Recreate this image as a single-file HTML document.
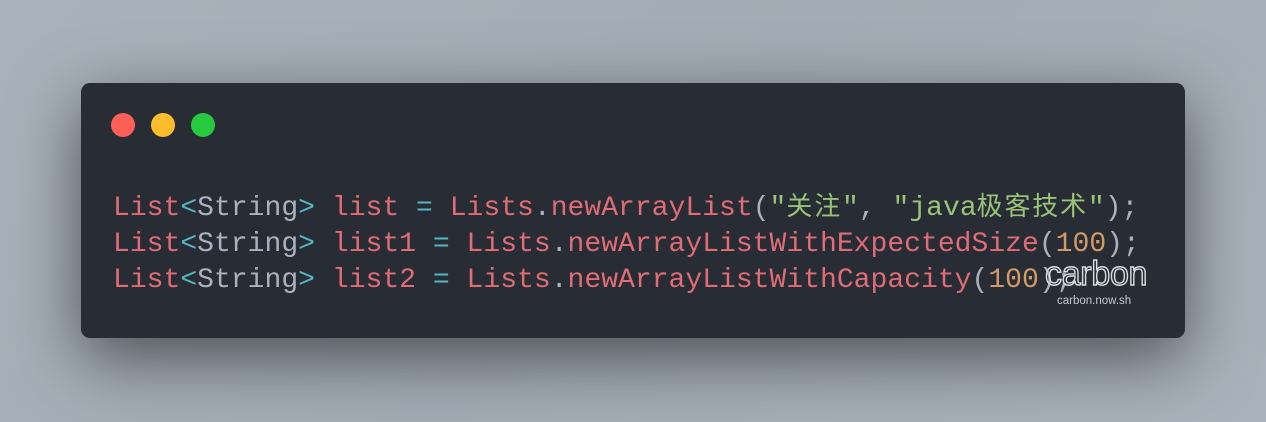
<!DOCTYPE html>
<html><head><meta charset="utf-8"><style>
html,body{margin:0;padding:0;}
body{width:1266px;height:422px;overflow:hidden;background:linear-gradient(135deg,#a9b2bc 0%,#a3acb6 50%,#a9b2bc 100%);position:relative;}
.win{position:absolute;left:81px;top:83px;width:1104px;height:255px;background:#282c34;border-radius:9px;box-shadow:0 20px 68px rgba(0,0,0,0.55);}
.dot{position:absolute;top:30px;width:24px;height:24px;border-radius:50%;}
pre{position:absolute;left:32px;top:104px;margin:0;font-family:"Liberation Mono",monospace;font-size:28.05px;line-height:36px;color:#abb2bf;}
.r{color:#e06c75}.c{color:#56b6c2}.g{color:#98c379}.o{color:#d19a66}
.k{font-family:"Noto Sans CJK SC",sans-serif;letter-spacing:1.8px;font-size:26px}
.wm{position:absolute;left:964px;top:172px;font-family:"Liberation Sans",sans-serif;font-size:34px;color:transparent;-webkit-text-stroke:1.4px #d8dde3;letter-spacing:-0.3px;}
.wm2{position:absolute;left:976px;top:212px;font-family:"Liberation Sans",sans-serif;font-size:11.5px;color:#c4c9cf;}
</style></head><body>
<div class="win">
<div class="dot" style="left:30px;background:#ff5f56"></div>
<div class="dot" style="left:70px;background:#ffbd2e"></div>
<div class="dot" style="left:110px;background:#27c93f"></div>
<pre><span class="r">List</span><span class="c">&lt;</span>String<span class="c">&gt;</span> <span class="r">list</span> <span class="c">=</span> <span class="r">Lists</span>.<span class="r">newArrayList</span>(<span class="g">"<span class="k">关注</span>"</span>, <span class="g">"java<span class="k">极客技术</span>"</span>);
<span class="r">List</span><span class="c">&lt;</span>String<span class="c">&gt;</span> <span class="r">list1</span> <span class="c">=</span> <span class="r">Lists</span>.<span class="r">newArrayListWithExpectedSize</span>(<span class="o">100</span>);
<span class="r">List</span><span class="c">&lt;</span>String<span class="c">&gt;</span> <span class="r">list2</span> <span class="c">=</span> <span class="r">Lists</span>.<span class="r">newArrayListWithCapacity</span>(<span class="o">100</span>);</pre>
<div class="wm">carbon</div>
<div class="wm2">carbon.now.sh</div>
</div>
</body></html>
